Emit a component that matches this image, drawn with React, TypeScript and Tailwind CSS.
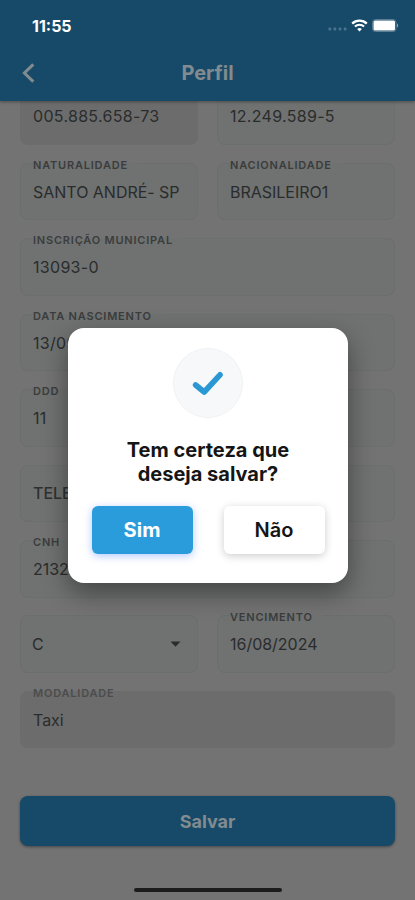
import clsx from 'clsx';

type FieldProps = {
  label?: string;
  value: string;
  disabled?: boolean;
  placeholder?: boolean;
  select?: boolean;
  masked?: boolean;
};

function Field({ label, value, disabled, placeholder, select, masked }: FieldProps) {
  return (
    <div
      className={clsx(
        'relative flex h-[57.5px] min-w-0 flex-1 items-center justify-between rounded-lg border',
        select ? 'pl-[11px] pr-[13px]' : 'px-3',
        disabled ? 'border-[#6c6c6c] bg-[#6c6c6c]' : 'border-[#6b6e6e] bg-[#6f7271]'
      )}
    >
      {label && (
        <span
          className={clsx(
            'absolute -top-[6px] left-3 isolate pr-2.5 text-[11px] leading-[14px] font-semibold tracking-[0.8px]',
            // strip that opens the notch in the top border
            'before:absolute before:inset-x-0 before:top-[5px] before:-z-10 before:h-px',
            disabled ? 'text-[#4c4c4c] before:bg-[#6c6c6c]' : 'text-[#3b3d3d] before:bg-[#6f7271]'
          )}
        >
          {label}
        </span>
      )}
      <span
        className={clsx(
          'text-base whitespace-nowrap',
          masked ? 'tracking-[0.3px]' : 'tracking-[-0.02px]',
          placeholder ? 'font-medium text-[#2f3131]' : 'text-[#2a2c2c]'
        )}
      >
        {value}
      </span>
      {select && (
        <svg className="mr-[3px] h-[6px] w-[11px]" viewBox="0 0 11 6" fill="#2a2c2c">
          <path d="M0.5 0.5h10L5.5 5.7z" />
        </svg>
      )}
    </div>
  );
}

function StatusBar() {
  return (
    <div className="flex h-[52px] items-center justify-between pr-[16px] pl-8 text-white">
      <span className="text-base font-bold">11:55</span>
      <div className="flex items-center">
        <svg className="mt-[6px] mr-1 h-1 w-[19px]" viewBox="0 0 19 4" fill="#4a738d">
          <rect x="0.5" y="0.5" width="2.6" height="3" rx="0.8" />
          <rect x="5.6" y="0.5" width="2.6" height="3" rx="0.8" />
          <rect x="10.7" y="0.5" width="2.6" height="3" rx="0.8" />
          <rect x="15.8" y="0.5" width="2.6" height="3" rx="0.8" />
        </svg>
        <svg className="mr-[4px] mb-[2px] h-[13px] w-[17px]" viewBox="0 0 17 13" fill="none" stroke="#fff">
          <path d="M1.2 4.6a10.4 10.4 0 0 1 14.6 0" strokeWidth="2.3" />
          <path d="M3.9 7.5a6.6 6.6 0 0 1 9.2 0" strokeWidth="2" />
          <path d="M8.5 12.6L6.1 10.1a3.5 3.5 0 0 1 4.8 0z" fill="#fff" stroke="none" />
        </svg>
        <svg className="mb-px h-[13px] w-[27px]" viewBox="0 0 27 13">
          <rect x="0.5" y="0.5" width="23.5" height="12" rx="3" fill="none" stroke="#5b8096" />
          <rect x="1.5" y="1.5" width="21.5" height="10" rx="1.5" fill="#fff" />
          <path d="M25 4.5c1.5.4 1.5 3.6 0 4z" fill="#8ba5b4" />
        </svg>
      </div>
    </div>
  );
}

function Header() {
  return (
    <header className="relative z-10 h-[101px] shrink-0 bg-[#174a68] shadow-[0_1px_3px_rgba(0,0,0,0.35)]">
      <StatusBar />
      <div className="grid grid-cols-3 items-center px-[22px] pt-[7px]">
        <svg className="h-5 w-[13px]" viewBox="0 0 13 20" fill="none" stroke="#828b90" strokeWidth="3">
          <path d="M11.3 1.4L2.4 10l8.9 8.6" />
        </svg>
        <h1 className="text-center text-xl font-bold text-[#828b90]">Perfil</h1>
      </div>
    </header>
  );
}

function ConfirmDialog() {
  return (
    <div className="absolute inset-0 z-20 flex items-start justify-center pt-[328px] pl-[1px]">
      <div className="flex h-[255px] w-[280px] flex-col items-center rounded-[16px] bg-white pt-[20px] shadow-[0_10px_26px_rgba(0,0,0,0.4)]">
        <div className="flex h-[70px] w-[70px] items-center justify-center rounded-full border border-[#f0f2f3] bg-[#f6f8f9]">
          <svg className="h-[26px] w-[32px]" viewBox="0 0 32 26" fill="none" stroke="#2b98d6" strokeWidth="5.6">
            <path d="M3.6 15l8.6 7L28 4.8" strokeLinecap="round" strokeLinejoin="round" />
          </svg>
        </div>
        <p className="mt-5 text-center text-xl leading-6 font-bold text-[#151515]">
          Tem certeza que
          <br />
          deseja salvar?
        </p>
        <div className="mt-5 flex gap-[31px]">
          <button className="h-12 w-[101px] rounded-md bg-[#2b9cdb] text-xl font-bold text-white shadow-[0_2px_8px_rgba(60,120,255,0.4)]">
            Sim
          </button>
          <button className="h-12 w-[101px] rounded-md bg-white text-xl font-semibold text-[#151515] shadow-[0_2px_8px_rgba(0,0,0,0.2)]">
            Não
          </button>
        </div>
      </div>
    </div>
  );
}

export default function App() {
  return (
    <div className="relative flex h-[900px] w-[415px] flex-col overflow-hidden bg-[#737373] font-['Inter','Liberation_Sans',sans-serif]">
      <Header />
      <main className="-mt-[13.5px] flex flex-1 flex-col gap-[17.93px] px-5">
        <div className="flex gap-[19px]">
          <Field value="005.885.658-73" disabled masked />
          <Field value="12.249.589-5" masked />
        </div>
        <div className="flex gap-[19px]">
          <Field label="NATURALIDADE" value="SANTO ANDRÉ- SP" />
          <Field label="NACIONALIDADE" value="BRASILEIRO1" />
        </div>
        <div className="flex">
          <Field label="INSCRIÇÃO MUNICIPAL" value="13093-0" masked />
        </div>
        <div className="flex">
          <Field label="DATA NASCIMENTO" value="13/09/1973" masked />
        </div>
        <div className="flex">
          <Field label="DDD" value="11" masked />
        </div>
        <div className="flex">
          <Field value="TELEFONE" placeholder />
        </div>
        <div className="flex">
          <Field label="CNH" value="2132" />
        </div>
        <div className="flex gap-[19px]">
          <Field value="C" select />
          <Field label="VENCIMENTO" value="16/08/2024" />
        </div>
        <div className="flex">
          <Field label="MODALIDADE" value="Taxi" disabled />
        </div>
        <button className="mt-[29.5px] h-[50px] rounded-lg bg-[#174a68] pt-0.5 text-lg font-bold text-[#828b90] shadow-[0_1px_3px_rgba(0,0,0,0.4)]">
          Salvar
        </button>
      </main>
      <div className="mb-[8px] h-1 w-[148px] self-center rounded-full bg-[#1c1c1c]" />
      <ConfirmDialog />
    </div>
  );
}
